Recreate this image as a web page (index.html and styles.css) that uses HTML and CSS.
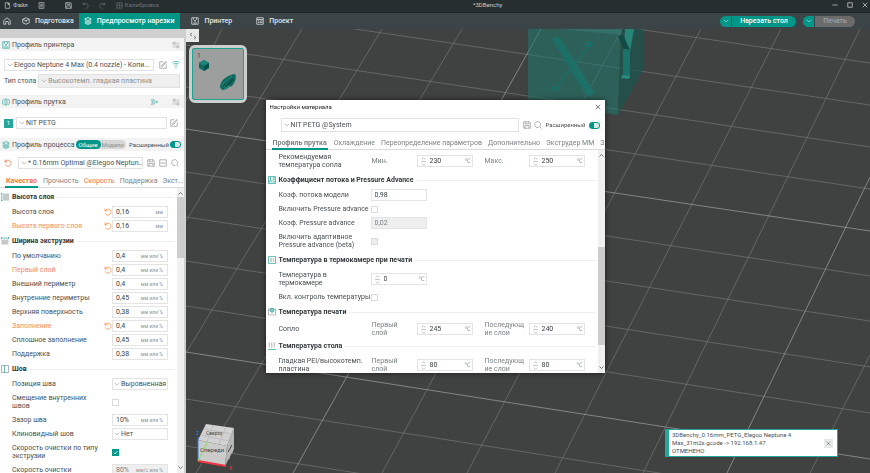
FILE: index.html
```
<!DOCTYPE html>
<html lang="ru">
<head>
  <meta charset="UTF-8">
  <meta name="viewport" content="width=device-width, initial-scale=1.0">
  <title>*3DBenchy</title>
  <link rel="stylesheet" href="styles.css">
</head>
<body>
  <svg class="defs" aria-hidden="true">
    <symbol id="i-file" viewBox="0 0 16 16"><path d="M9 1.500H3v13h10V6M9 1.500V6h4M11 1v5M9 3.500h5"/></symbol>
    <symbol id="i-doc" viewBox="0 0 16 16"><path d="M2.500 1.500h11v13h-11zM5 5h6M5 8h6M5 11h6"/></symbol>
    <symbol id="i-save" viewBox="0 0 16 16"><path d="M1.500 1.500h11l2 2v11h-13zM4.500 1.500v4h7v-4M4 14v-5h8v5"/></symbol>
    <symbol id="i-undo" viewBox="0 0 16 16"><path d="M3 1v5h5M3 6c3-5 11-3 11 3 0 3-2 5-6 6"/></symbol>
    <symbol id="i-redo" viewBox="0 0 16 16"><path d="M13 1v5H8M13 6C10 1 2 3 2 9c0 3 2 5 6 6"/></symbol>
    <symbol id="i-calib" viewBox="0 0 16 16"><path d="M2 1v14M2 2h12v12H2M2 8h12M8 2v4M8 10v4"/></symbol>
    <symbol id="i-home" viewBox="0 0 16 16"><path d="M1.500 7L8 1.500 14.500 7v7.500h-4V9h-5v5.500h-4z"/></symbol>
    <symbol id="i-cube" viewBox="0 0 16 16"><path d="M8 1.500l6.500 3v7L8 14.500l-6.500-3v-7zM1.500 4.500L8 7.500l6.500-3M8 7.500v3"/></symbol>
    <symbol id="i-layers" viewBox="0 0 16 16"><path d="M8 1l6.500 3L8 7 1.500 4zM1.500 7L8 10l6.500-3M1.500 9.500L8 12.500l6.500-3M1.500 12L8 15l6.500-3"/></symbol>
    <symbol id="i-printer" viewBox="0 0 16 16"><path d="M1.500 1.500h13v13h-13zM4 12h8M5 2v3l3 3 3-3V2M8 8v2"/></symbol>
    <symbol id="i-list" viewBox="0 0 16 16"><path d="M1.500 1.500h13v13h-13zM1.500 5h13M4 8h2M7 8h6M4 11h2M7 11h6"/></symbol>
    <symbol id="i-sliders" viewBox="0 0 16 16"><path d="M1 4h2M3 2v4h3V2zM6 4h9M1 8h14M1 12h9M10 10v4h3v-4zM13 12h2" stroke-width="1"/></symbol>
    <symbol id="i-edit" viewBox="0 0 16 16"><path d="M14.500 7v7.500h-13v-13H9M5 11l1-3 8-7 1 1-7 8z"/></symbol>
    <symbol id="i-wifi" viewBox="0 0 16 16"><path d="M1 3c4-3 10-3 14 0M3 6c3-2 7-2 10 0M5 9c2-1 4-1 6 0M8 11v4"/></symbol>
    <symbol id="i-spool" viewBox="0 0 16 16"><path d="M4 2c-4 2-4 10 0 12M6 2v12h4V2zM12 2c4 2 4 10 0 12"/></symbol>
    <symbol id="i-addspool" viewBox="0 0 16 16"><path d="M2 2c3 2 3 10 0 12M6 2v12M6 3c5 1 5 9 0 10M11 8h5M13.500 5.500v5" stroke-width="1.200"/></symbol>
    <symbol id="i-minus" viewBox="0 0 16 16"><path d="M1.500 1.500h13v13h-13zM3 8h10"/></symbol>
    <symbol id="i-search" viewBox="0 0 16 16"><path d="M12 11a6 6 0 1 0-3 2M11 11l4 4"/></symbol>
    <symbol id="i-reset" viewBox="0 0 16 16"><path d="M2 1v5h5M2 6C6-1 15 3 14 9c-1 6-9 7-12 2"/></symbol>
    <symbol id="i-chevron" viewBox="0 0 16 16"><path d="M2 5c2 1 4 5 6 5s4-4 6-5"/></symbol>
    <symbol id="i-close" viewBox="0 0 16 16"><path d="M2 2l12 12M14 2L2 14"/></symbol>
    <symbol id="i-spin" viewBox="0 0 10 20"><path d="M1 5l4-3 4 3M0 10h10M1 15l4 3 4-3"/></symbol>
    <symbol id="i-up" viewBox="0 0 10 10"><path d="M1 7l4-4 4 4"/></symbol>
    <symbol id="i-down" viewBox="0 0 10 10"><path d="M1 3l4 4 4-4"/></symbol>
    <symbol id="i-height" viewBox="0 0 16 16"><path d="M4 1h12v14H4z" fill="#c4c8c8" stroke="none"/><path d="M0 1h3M0 15h3M1.500 1v14"/></symbol>
    <symbol id="i-width" viewBox="0 0 16 16"><path d="M1 5h14v10H1z" fill="#c4c8c8" stroke="none"/><path d="M1 0v4M15 0v4M1 2h14"/></symbol>
    <symbol id="i-seam" viewBox="0 0 16 16"><path d="M1 1h14v14H1z" stroke="#9a9a9a"/><path d="M7 0v16"/></symbol>
    <symbol id="i-flow" viewBox="0 0 16 16"><path d="M1 1h14v14H1z" fill="#dceeec"/><path d="M5 2v6l-2 4M5 10h3M12 2v4l-2 3M10 12h4"/></symbol>
    <symbol id="i-chamber" viewBox="0 0 16 16"><path d="M1 1h14v14H1z"/><path d="M5 4l-1 2 1 2-1 2 1 2M8 4L7 6l1 2-1 2 1 2M12 4l-1 2 1 2-1 2 1 2" stroke="#aaa"/></symbol>
    <symbol id="i-nozzle" viewBox="0 0 16 16"><path d="M4 1h8v5l-4 3-4-3z" fill="#7fcbc3"/><path d="M1 1v14M15 1v14M4 12l1 3M8 11v4M12 12l-1 3" stroke="#9a9a9a"/></symbol>
    <symbol id="i-bed" viewBox="0 0 16 16"><path d="M3 1L2 4l1 3-1 4M8 1L7 4l1 3-1 4M13 1l-1 3 1 3-1 4" stroke="#999"/><path d="M0 15h16"/></symbol>
  </svg>

  <header class="titlebar">
    <button class="menu"><svg><use href="#i-file"/></svg>Файл</button>
    <button class="menu doc" aria-label="Меню"><svg><use href="#i-doc"/></svg></button>
    <button class="menu" aria-label="Сохранить"><svg><use href="#i-save"/></svg></button>
    <button class="menu dim" aria-label="Отменить"><svg><use href="#i-undo"/></svg></button>
    <button class="menu dim" aria-label="Вернуть"><svg><use href="#i-redo"/></svg></button>
    <button class="menu dim"><svg><use href="#i-calib"/></svg>Калибровка</button>
    <h1>*3DBenchy</h1>
    <div class="window-buttons">
      <button aria-label="Свернуть"><svg viewBox="0 0 16 16"><path d="M1 8h14"/></svg></button>
      <button aria-label="Развернуть"><svg viewBox="0 0 16 16"><path d="M2 2h12v12H2z"/></svg></button>
      <button aria-label="Закрыть"><svg><use href="#i-close"/></svg></button>
    </div>
  </header>

  <nav class="tabs">
    <a href="#" class="home" aria-label="Домой"><svg><use href="#i-home"/></svg></a>
    <a href="#" class="prepare"><svg><use href="#i-cube"/></svg>Подготовка</a>
    <a href="#" class="active"><svg><use href="#i-layers"/></svg>Предпросмотр нарезки</a>
    <a href="#" class="device"><svg><use href="#i-printer"/></svg>Принтер</a>
    <a href="#" class="project"><svg><use href="#i-list"/></svg>Проект</a>
    <div class="actions">
      <div class="split"><button aria-label="Режим нарезки"><svg><use href="#i-chevron"/></svg></button><button class="main">Нарезать стол</button></div>
      <div class="split off"><button aria-label="Режим печати"><svg><use href="#i-chevron"/></svg></button><button class="main" disabled>Печать</button></div>
    </div>
  </nav>

  <main class="workspace">
    <aside class="sidebar">
      <div class="strip"></div>
      <div class="panel-head">
        <svg class="teal"><use href="#i-printer"/></svg><h2>Профиль принтера</h2>
        <svg class="end"><use href="#i-sliders"/></svg>
      </div>
      <div class="panel printer">
        <div class="line">
          <div class="combo"><svg><use href="#i-chevron"/></svg><select aria-label="Принтер"><option>Elegoo Neptune 4 Max (0.4 nozzle) - Копи...</option></select></div>
          <svg><use href="#i-edit"/></svg><svg class="teal"><use href="#i-wifi"/></svg>
        </div>
        <div class="line bed">
          <label for="bed">Тип стола</label>
          <div class="combo disabled"><svg><use href="#i-chevron"/></svg><select id="bed" disabled><option>Высокотемп. гладкая пластина</option></select></div>
        </div>
      </div>
      <div class="panel-head">
        <svg class="teal"><use href="#i-spool"/></svg><h2>Профиль прутка</h2>
        <svg class="end teal"><use href="#i-addspool"/></svg><svg class="sliders"><use href="#i-sliders"/></svg>
      </div>
      <div class="panel filament">
        <div class="line">
          <button class="slot">1</button>
          <div class="combo"><svg><use href="#i-chevron"/></svg><select aria-label="Пруток"><option>NIT PETG</option></select></div>
          <svg><use href="#i-edit"/></svg>
        </div>
      </div>
      <div class="panel-head process">
        <svg class="teal"><use href="#i-layers"/></svg><h2>Профиль процесса</h2>
        <div class="segment"><button class="on">Общие</button><button>Модели</button></div>
        <label for="adv">Расширенный</label><input type="checkbox" class="toggle" id="adv" checked>
      </div>
      <div class="line preset">
        <svg class="orange"><use href="#i-reset"/></svg>
        <div class="combo"><svg><use href="#i-chevron"/></svg><select aria-label="Профиль"><option>* 0.16mm Optimal @Elegoo Neptun...</option></select></div>
        <svg><use href="#i-save"/></svg><svg><use href="#i-minus"/></svg><svg><use href="#i-search"/></svg>
      </div>
      <div class="subtabs">
        <a href="#" class="active orange">Качество</a><a href="#">Прочность</a><a href="#" class="orange">Скорость</a><a href="#">Поддержка</a><a href="#">Экст...</a>
      </div>
      <div class="scroll">
        <div class="options">
          <h3><svg><use href="#i-height"/></svg>Высота слоя</h3>
          <div class="row"><label for="o1">Высота слоя</label><svg class="reset"><use href="#i-reset"/></svg><div class="field"><input id="o1" value="0,16"><span>мм</span></div></div>
          <div class="row changed"><label for="o2">Высота первого слоя</label><svg class="reset"><use href="#i-reset"/></svg><div class="field"><input id="o2" value="0,16"><span>мм</span></div></div>
          <h3><svg><use href="#i-width"/></svg>Ширина экструзии</h3>
          <div class="row"><label for="o3">По умолчанию</label><div class="field"><input id="o3" value="0,4"><span>мм или %</span></div></div>
          <div class="row changed"><label for="o4">Первый слой</label><svg class="reset"><use href="#i-reset"/></svg><div class="field"><input id="o4" value="0,4"><span>мм или %</span></div></div>
          <div class="row"><label for="o5">Внешний периметр</label><div class="field"><input id="o5" value="0,4"><span>мм или %</span></div></div>
          <div class="row"><label for="o6">Внутренние периметры</label><div class="field"><input id="o6" value="0,45"><span>мм или %</span></div></div>
          <div class="row"><label for="o7">Верхняя поверхность</label><div class="field"><input id="o7" value="0,38"><span>мм или %</span></div></div>
          <div class="row changed"><label for="o8">Заполнение</label><svg class="reset"><use href="#i-reset"/></svg><div class="field"><input id="o8" value="0,4"><span>мм или %</span></div></div>
          <div class="row"><label for="o9">Сплошное заполнение</label><div class="field"><input id="o9" value="0,45"><span>мм или %</span></div></div>
          <div class="row"><label for="o10">Поддержка</label><div class="field"><input id="o10" value="0,38"><span>мм или %</span></div></div>
          <h3><svg><use href="#i-seam"/></svg>Шов</h3>
          <div class="row"><label for="o11">Позиция шва</label><div class="field combo"><svg><use href="#i-chevron"/></svg><select id="o11"><option>Выровненная</option></select></div></div>
          <div class="row tall"><label for="o12">Смещение внутренних<br>швов</label><div class="check"><input type="checkbox" id="o12"></div></div>
          <div class="row"><label for="o13">Зазор шва</label><div class="field"><input id="o13" value="10%"><span>мм или %</span></div></div>
          <div class="row"><label for="o14">Клиновидный шов</label><div class="field combo"><svg><use href="#i-chevron"/></svg><select id="o14"><option>Нет</option></select></div></div>
          <div class="row tall"><label for="o15">Скорость очистки по типу<br>экструзии</label><div class="check"><input type="checkbox" id="o15" checked></div></div>
          <div class="row"><label for="o16">Скорость очистки</label><div class="field disabled"><input id="o16" value="80%" disabled><span>мм/с или %</span></div></div>
        </div>
        <div class="scrollbar"><svg><use href="#i-up"/></svg><div class="track"><div class="thumb"></div></div><svg><use href="#i-down"/></svg></div>
      </div>
    </aside>

    <section class="viewport">
      <svg class="scene" viewBox="186 29 684 444" preserveAspectRatio="xMinYMin slice">
        <g class="grid">
          <path d="M186-37L870 63M186 4L870 105M186 45L870 147M186 87L870 189M186 172L870 276M186 217L870 321M186 261L870 367M186 306L870 413M186 399L870 506M186 446L870 554"/>
          <path d="M222 29L186 101M302 29L186 221M382 29L186 353M462 29L196 473M622 29L382 473M701 29L467 473M781 29L555 473M860 29L643 473M870 355L810 473"/>
          <path class="major" d="M186 129L870 231M186 352L870 459M541 29L293 473M870 177L727 473"/>
        </g>
        <g class="model">
          <path d="M528 29h93l-3 86-90-14z" fill="#1f7a70" fill-opacity=".55"/>
          <path d="M621 29h22v41l-25 45z" fill="#15574f" fill-opacity=".65"/>
          <path d="M528 29h94l-1 6-60-6z" fill="#3b7a74" fill-opacity=".6"/>
          <path d="M552 39l3-2 5 1 34 54-2 4-6-1z" fill="#1f7067"/>
          <path d="M553 40l7 1 25 44-4 2zM552 86l8 1-2 4-8-1zM586 41l8 1-3 5-7-1z" fill="#1c6f66" fill-opacity=".8"/>
          <path d="M589 46L556 87" stroke="#1c6f66" fill="none"/>
          <path d="M625 29h9l-4 23-6-1z" fill="#2a8579"/>
          <path d="M618 36l5-1 7 15-6-1z" fill="#124a44"/>
          <path d="M623 49l7 1v28l-7-2z" fill="#1a7369"/>
          <path d="M622 75l8 1-1 3-8-1z" fill="#2a8c80"/>
        </g>
      </svg>
      <button class="collapse" aria-label="Свернуть панель"><svg viewBox="0 0 16 16"><path d="M6 2L2 5l4 3M10 8l4 3-4 3"/></svg></button>
      <button class="plate" aria-label="Стол 1">
        <span>1</span>
        <svg viewBox="0 0 50 50">
          <path d="M11 11l5 3v5l-5 3-5-3v-5z" fill="#0f6a60"/><path d="M11 11l5 3-5 3-5-3z" fill="#1b857a"/><path d="M11 17l5-3v5l-5 3z" fill="#0b514a"/>
          <path d="M27 37c1-6 7-11 15-12 2 3 0 9-3 12-4 1-6 4-8 4-3 0-4-2-4-4z" fill="#0f6a60"/><path d="M32 34l6-6M33 38l6-8M30 37l3-3M36 36l4-6" stroke="#08453e"/><path d="M29 36l10-9M31 40l6-3" stroke="#2a9085"/>
        </svg>
      </button>
      <svg class="navcube" viewBox="0 0 44 50">
        <path d="M13 3l28 4-7 18-29-6z" fill="#d2d2d2"/><path d="M5 19l29 6-2 20-27-5z" fill="#cbcbcb"/><path d="M41 7v21l-9 17 2-20z" fill="#b4b4b4"/>
        <path d="M11 8l28 5M8 14l28 6M20 4l-6 17M33 6l-7 17M36 20v18M39 14v18" stroke="#bdbdbd" fill="none"/>
        <path d="M5 40V16" stroke="#2d7be0"/><path d="M5 40l28 5" stroke="#ee3344" stroke-width="2"/><path d="M5 40l9-18" stroke="#8bdc5a"/>
        <text x="13" y="14">Сверху</text><text x="7" y="31" class="front">Спереди</text><path d="M35 31l4-7" stroke="#444"/>
        <text x="3" y="14" class="z">Z</text><text x="36" y="49" class="x">X</text><text x="12" y="24" class="y">Y</text>
      </svg>
      <div class="toast" role="status">
        <p>3DBenchy_0.16mm_PETG_Elegoo Neptune 4<br>Max_31m2s.gcode -&gt; 192.168.1.47<br>ОТМЕНЕНО</p>
        <button aria-label="Закрыть"><svg><use href="#i-close"/></svg></button>
      </div>
    </section>
  </main>

  <div class="dialog" role="dialog" aria-labelledby="dlg-title">
    <div class="dialog-title"><h2 id="dlg-title">Настройки материала</h2><button aria-label="Закрыть"><svg><use href="#i-close"/></svg></button></div>
    <div class="line dialog-preset">
      <div class="combo"><svg><use href="#i-chevron"/></svg><select aria-label="Материал"><option>NIT PETG @System</option></select></div>
      <svg><use href="#i-save"/></svg><svg><use href="#i-search"/></svg>
      <label for="adv2">Расширенный</label><input type="checkbox" class="toggle" id="adv2" checked>
    </div>
    <div class="subtabs">
      <a href="#" class="active">Профиль прутка</a><a href="#">Охлаждение</a><a href="#">Переопределение параметров</a><a href="#">Дополнительно</a><a href="#">Экструдер ММ</a><a href="#">З</a>
    </div>
    <div class="scroll">
      <div class="options">
        <div class="row pair tall"><b>Рекомендуемая<br>температура сопла</b>
          <label for="d1">Мин.</label><div class="field"><svg><use href="#i-spin"/></svg><input id="d1" value="230"><span>℃</span></div>
          <label for="d2">Макс.</label><div class="field"><svg><use href="#i-spin"/></svg><input id="d2" value="250"><span>℃</span></div></div>
        <h3><svg><use href="#i-flow"/></svg>Коэффициент потока и Pressure Advance</h3>
        <div class="row"><label for="d3">Коэф. потока модели</label><div class="field"><input id="d3" value="0,98"></div></div>
        <div class="row"><label for="d4">Включить Pressure advance</label><div class="check"><input type="checkbox" id="d4"></div></div>
        <div class="row"><label for="d5">Коэф. Pressure advance</label><div class="field disabled"><input id="d5" value="0,02" disabled></div></div>
        <div class="row tall"><label for="d6">Включить адаптивное<br>Pressure advance (beta)</label><div class="check"><input type="checkbox" id="d6" disabled></div></div>
        <h3><svg><use href="#i-chamber"/></svg>Температура в термокамере при печати</h3>
        <div class="row tall"><label for="d7">Температура в<br>термокамере</label><div class="field"><svg><use href="#i-spin"/></svg><input id="d7" value="0"><span>℃</span></div></div>
        <div class="row"><label for="d8">Вкл. контроль температуры</label><div class="check"><input type="checkbox" id="d8"></div></div>
        <h3><svg><use href="#i-nozzle"/></svg>Температура печати</h3>
        <div class="row pair"><b>Сопло</b>
          <label for="d9">Первый<br>слой</label><div class="field"><svg><use href="#i-spin"/></svg><input id="d9" value="245"><span>℃</span></div>
          <label for="d10">Последующ<br>ие слои</label><div class="field"><svg><use href="#i-spin"/></svg><input id="d10" value="240"><span>℃</span></div></div>
        <h3><svg><use href="#i-bed"/></svg>Температура стола</h3>
        <div class="row pair tall"><b>Гладкая PEI/высокотемп.<br>пластина</b>
          <label for="d11">Первый<br>слой</label><div class="field"><svg><use href="#i-spin"/></svg><input id="d11" value="80"><span>℃</span></div>
          <label for="d12">Последующ<br>ие слои</label><div class="field"><svg><use href="#i-spin"/></svg><input id="d12" value="80"><span>℃</span></div></div>
      </div>
      <div class="scrollbar"><svg><use href="#i-up"/></svg><div class="track"><div class="thumb"></div></div><svg><use href="#i-down"/></svg></div>
    </div>
  </div>
</body>
</html>
```
FILE: styles.css
```
* {
  box-sizing: border-box;
}

body {
  margin: 0;
  height: 100vh;
  display: flex;
  flex-direction: column;
  overflow: hidden;
  font-family: Roboto, "Noto Sans", "Noto Sans CJK SC", sans-serif;
  font-size: 7px;
  line-height: 8px;
  color: #4a5054;
}

h1, h2, h3, p {
  margin: 0;
  font-size: 7px;
  font-weight: normal;
}

button, input, select {
  font: inherit;
  color: inherit;
  border: 0;
  padding: 0;
  margin: 0;
  background: none;
}

a {
  color: inherit;
  text-decoration: none;
}

svg {
  flex: none;
  width: 8px;
  height: 8px;
  fill: none;
  stroke: currentColor;
  stroke-width: 1.5;
}

.defs {
  position: absolute;
  width: 0;
  height: 0;
}

.teal {
  color: #3aaba0;
}

.orange {
  color: #f0764a;
}

/* title bar */
.titlebar {
  display: flex;
  align-items: center;
  height: 13px;
  padding: 0 2px 2px 4px;
  gap: 10px;
  background: #262e30;
  border-bottom: 1px solid #1f2628;
  color: #c8cccc;
  font-size: 6px;
}

.menu {
  display: flex;
  align-items: center;
  gap: 2px;
}

.menu svg {
  width: 7px;
  height: 7px;
}

.doc {
  margin-right: 10px;
}

.dim {
  color: #6b7375;
}

.titlebar h1 {
  flex: 1;
  font-size: 6px;
  padding-left: 304px;
}

.window-buttons {
  display: flex;
  gap: 9px;
}

.window-buttons button {
  display: flex;
}

.window-buttons svg {
  width: 6px;
  height: 6px;
  stroke-width: 2;
}

/* main tabs */
.tabs {
  display: flex;
  height: 16px;
  background: #3b4446;
  color: #e2e5e5;
  font-weight: 500;
}

.tabs a {
  display: flex;
  align-items: center;
  gap: 5px;
  padding: 0 5px;
}

.tabs .home {
  padding: 0 7px 0 3px;
}

.tabs .prepare {
  padding-left: 4px;
}

.tabs .active {
  padding-right: 6px;
  background: #009688;
  color: #fff;
}

.tabs .device {
  padding: 0 19px 0 11px;
}

.actions {
  display: flex;
  align-items: center;
  gap: 7px;
  margin-left: auto;
  padding-right: 15px;
}

.split {
  display: flex;
  gap: 1px;
  height: 11px;
}

.split button {
  display: flex;
  align-items: center;
  justify-content: center;
  width: 11px;
  border-radius: 6px 0 0 6px;
  background: #009688;
  color: #fff;
}

.split svg {
  width: 6px;
  height: 6px;
}

.split .main {
  width: 64px;
  border-radius: 0 6px 6px 0;
}

.split.off .main {
  width: 40px;
  background: #6b6b6b;
  color: #a2a2a2;
}

.workspace {
  flex: 1;
  display: flex;
  min-height: 0;
}

/* sidebar */
.sidebar {
  flex: 0 0 186px;
  display: flex;
  flex-direction: column;
  min-width: 0;
  min-height: 0;
  overflow: hidden;
  background: #fff;
  border-right: 2px solid #cfcfcf;
}

.strip {
  flex: none;
  height: 9px;
  background: #cfcfcf;
}

.panel-head {
  display: flex;
  align-items: center;
  gap: 2px;
  flex: none;
  height: 13px;
  padding: 0 4px 0 2px;
  background: #f3f3f3;
  white-space: nowrap;
}

.panel-head .end {
  margin-left: auto;
}

.panel-head .sliders {
  margin-left: 12px;
}

.sliders, .panel-head .end:last-child {
  color: #999;
}

.line {
  display: flex;
  align-items: center;
  gap: 4px;
}

.line > svg {
  color: #999;
}

.line > .teal {
  color: #3aaba0;
}

.line > .orange {
  color: #f0764a;
}

.panel {
  padding: 8px 4px 7px;
}

.printer .line {
  gap: 5px;
}

.printer .bed {
  margin-top: 3px;
  gap: 2px;
}

.bed .combo {
  height: 14px;
}

.filament {
  padding: 9px 6px 9px 4px;
}

.filament .line {
  gap: 3px;
}

.slot {
  width: 9px;
  height: 9px;
  background: #26a69a;
  color: #fff;
  font-size: 6px;
}

.combo {
  flex: 1;
  display: flex;
  align-items: center;
  min-width: 0;
  height: 12px;
  padding-left: 2px;
  gap: 1px;
  border: 1px solid #e2e2e2;
  background: #fff;
}

.combo svg {
  width: 6px;
  height: 6px;
  color: #888;
}

.combo select {
  flex: 1;
  min-width: 0;
  appearance: none;
  opacity: 1;
}

.disabled, .disabled.combo {
  background: #efefef;
  color: #8b8f91;
}

.process {
  gap: 1px;
  padding-right: 3px;
  font-size: 6px;
}

.process h2 {
  padding-left: 1px;
}

.segment {
  display: flex;
  height: 9px;
  border-radius: 5px;
  background: #d6d6d6;
  color: #8b8f91;
}

.segment button {
  padding: 0 2px 0 1px;
  border-radius: 5px;
}

.segment .on {
  padding: 0 3px;
  background: #009688;
  color: #fff;
}

.process label {
  margin-left: auto;
}

.toggle {
  appearance: none;
  flex: none;
  width: 11px;
  height: 7px;
  border-radius: 3px;
  border: 1px solid #009688;
  background: linear-gradient(to right, #009688 40%, #d9e8e6 40%);
}

.preset {
  padding: 6px 5px 0 4px;
}

.preset .combo {
  margin-left: 2px;
}

.subtabs {
  display: flex;
  gap: 6px;
  flex: none;
  padding-left: 6px;
  overflow: hidden;
  box-shadow: inset 0 -1px #dcdcdc;
  color: #7c8285;
  white-space: nowrap;
}

.sidebar .subtabs {
  gap: 5px;
  margin-top: 7px;
  padding-left: 5px;
}

.subtabs a {
  padding-top: 1px;
  line-height: 9px;
  border-bottom: 2px solid transparent;
}

.subtabs .active {
  padding: 1px 1px 0;
  border-color: #009688;
  font-weight: bold;
}

.subtabs .orange {
  color: #f0764a;
}

/* option lists */
.scroll {
  flex: 1;
  display: flex;
  min-height: 0;
}

.options {
  flex: 1;
  min-width: 0;
  overflow: hidden;
}

.sidebar .options {
  padding-top: 1px;
}

.options h3 {
  display: flex;
  align-items: center;
  gap: 3px;
  height: 16px;
  padding: 0 3px 0 1px;
  font-weight: bold;
  color: #32383b;
}

.options h3 svg {
  color: #3aaba0;
}

.options h3::after {
  content: "";
  flex: 1;
  height: 1px;
  background: #eee;
}

.row {
  display: flex;
  align-items: center;
  height: 14px;
  padding-left: 12px;
}

.row.tall {
  height: 22px;
}

.row label {
  flex: 0 0 92px;
  white-space: nowrap;
}

.changed label {
  color: #f58a66;
}

.reset {
  color: #f58a3c;
}

.row .field, .row .check {
  margin-left: 8px;
}

.row .reset + .field {
  margin-left: 0;
}

.field {
  flex: 0 0 56px;
  display: flex;
  align-items: center;
  min-width: 0;
  height: 12px;
  padding: 0 4px 0 3px;
  border: 1px solid #e4e4e4;
}

.field input {
  flex: 1;
  width: 0;
  min-width: 0;
  color: #3c4245;
}

.field span {
  font-size: 5px;
  color: #8b8f91;
}

.field.combo {
  padding: 0 0 0 1px;
}

.field.disabled input {
  color: #777c7f;
}

.check {
  display: flex;
}

.check input {
  appearance: none;
  width: 7px;
  height: 7px;
  border: 1px solid #dcdcdc;
}

.check input:checked {
  border-color: #009688;
  background: #009688 url("data:image/svg+xml,%3Csvg xmlns='http://www.w3.org/2000/svg' viewBox='0 0 10 10'%3E%3Cpath d='M1 5l3 3 5-6' fill='none' stroke='white' stroke-width='1.5'/%3E%3C/svg%3E") center / contain no-repeat;
}

.check input:disabled {
  background: #ececec;
}

.scrollbar {
  flex: 0 0 7px;
  display: flex;
  flex-direction: column;
  align-items: center;
  padding: 2px 0;
  background: #f0f0f0;
}

.scrollbar svg {
  width: 5px;
  height: 7px;
}

.track {
  flex: 1;
  width: 100%;
}

.thumb {
  height: 23%;
  background: #cdcdcd;
}

/* 3D view */
.viewport {
  flex: 1;
  position: relative;
  overflow: hidden;
  background: #404241;
}

.scene {
  display: block;
  width: 100%;
  height: 100%;
  stroke: none;
}

.grid {
  stroke: #747675;
  stroke-width: 0.7;
}

.major {
  stroke: #a0a2a1;
}

.collapse {
  position: absolute;
  left: 0;
  top: 0;
  display: flex;
  align-items: center;
  justify-content: center;
  width: 13px;
  height: 13px;
  background: #e8e8e8;
  color: #555;
}

.plate {
  position: absolute;
  left: 3px;
  top: 16px;
  width: 58px;
  height: 58px;
  padding: 0;
  border: 3px solid #cdcfce;
  border-radius: 6px;
  background: #9c9f9e;
}

.plate svg {
  display: block;
  width: 52px;
  height: 52px;
  border: 1px solid #1fa193;
  border-radius: 2px;
  stroke: none;
  stroke-width: 1;
}

.plate span {
  position: absolute;
  left: 5px;
  top: 4px;
  color: #555;
}

.navcube {
  position: absolute;
  left: 7px;
  bottom: 2px;
  width: 44px;
  height: 50px;
  stroke: none;
  stroke-width: 1;
}

.navcube text {
  font-size: 5px;
  fill: #444;
}

.navcube .front {
  font-size: 6px;
}

.navcube .z {
  fill: #2d7be0;
}

.navcube .x {
  fill: #ee3344;
}

.navcube .y {
  fill: #8bdc5a;
}

.toast {
  position: absolute;
  right: 32px;
  bottom: 16px;
  display: flex;
  align-items: center;
  justify-content: space-between;
  width: 173px;
  height: 28px;
  padding: 0 4px 0 3px;
  border: 1px solid #26a69a;
  border-left-width: 4px;
  border-radius: 1px;
  background: #fff;
}

.toast p {
  font-size: 6px;
}

.toast button {
  display: flex;
  padding: 2px;
  background: #e4e8e6;
}

.toast svg {
  width: 5px;
  height: 5px;
}

/* material dialog */
.dialog {
  position: fixed;
  inset: 100px 0;
  margin: 0 auto;
  display: flex;
  flex-direction: column;
  width: 339px;
  background: #fff;
  box-shadow: 0 0 5px rgba(0, 0, 0, 0.6);
}

.dialog-title {
  display: flex;
  align-items: center;
  justify-content: space-between;
  height: 13px;
  padding: 0 4px;
  color: #222;
}

.dialog-title h2 {
  font-size: 6px;
}

.dialog-title button {
  display: flex;
}

.dialog-title svg {
  width: 6px;
  height: 6px;
}

.dialog-preset {
  gap: 3px;
  padding: 5px 5px 6px 15px;
}

.dialog-preset .combo {
  height: 14px;
  margin-right: 1px;
}

.dialog-preset label {
  font-size: 6px;
}

.dialog .options h3 {
  padding: 0 3px 0 2px;
}

.dialog .row {
  padding-left: 13px;
}

.dialog .check, .dialog .field {
  margin-left: 0;
}

.dialog .field {
  padding-right: 1px;
}

.dialog .field span {
  font-size: 6px;
}

.dialog .row.pair:not(.tall) {
  height: 18px;
}

.pair b {
  flex: 0 0 93px;
  font-weight: normal;
  white-space: nowrap;
}

.pair label {
  flex: 0 0 45px;
  color: #7c8285;
}

.pair .field + label {
  flex-basis: 44px;
  margin-left: 12px;
}

.dialog .field svg {
  width: 5px;
  height: 9px;
  margin-right: 4px;
  color: #aaa;
}

.dialog .track {
  display: flex;
  flex-direction: column;
  justify-content: flex-end;
}

.dialog .thumb {
  height: 48%;
  margin-bottom: 19px;
}
```
